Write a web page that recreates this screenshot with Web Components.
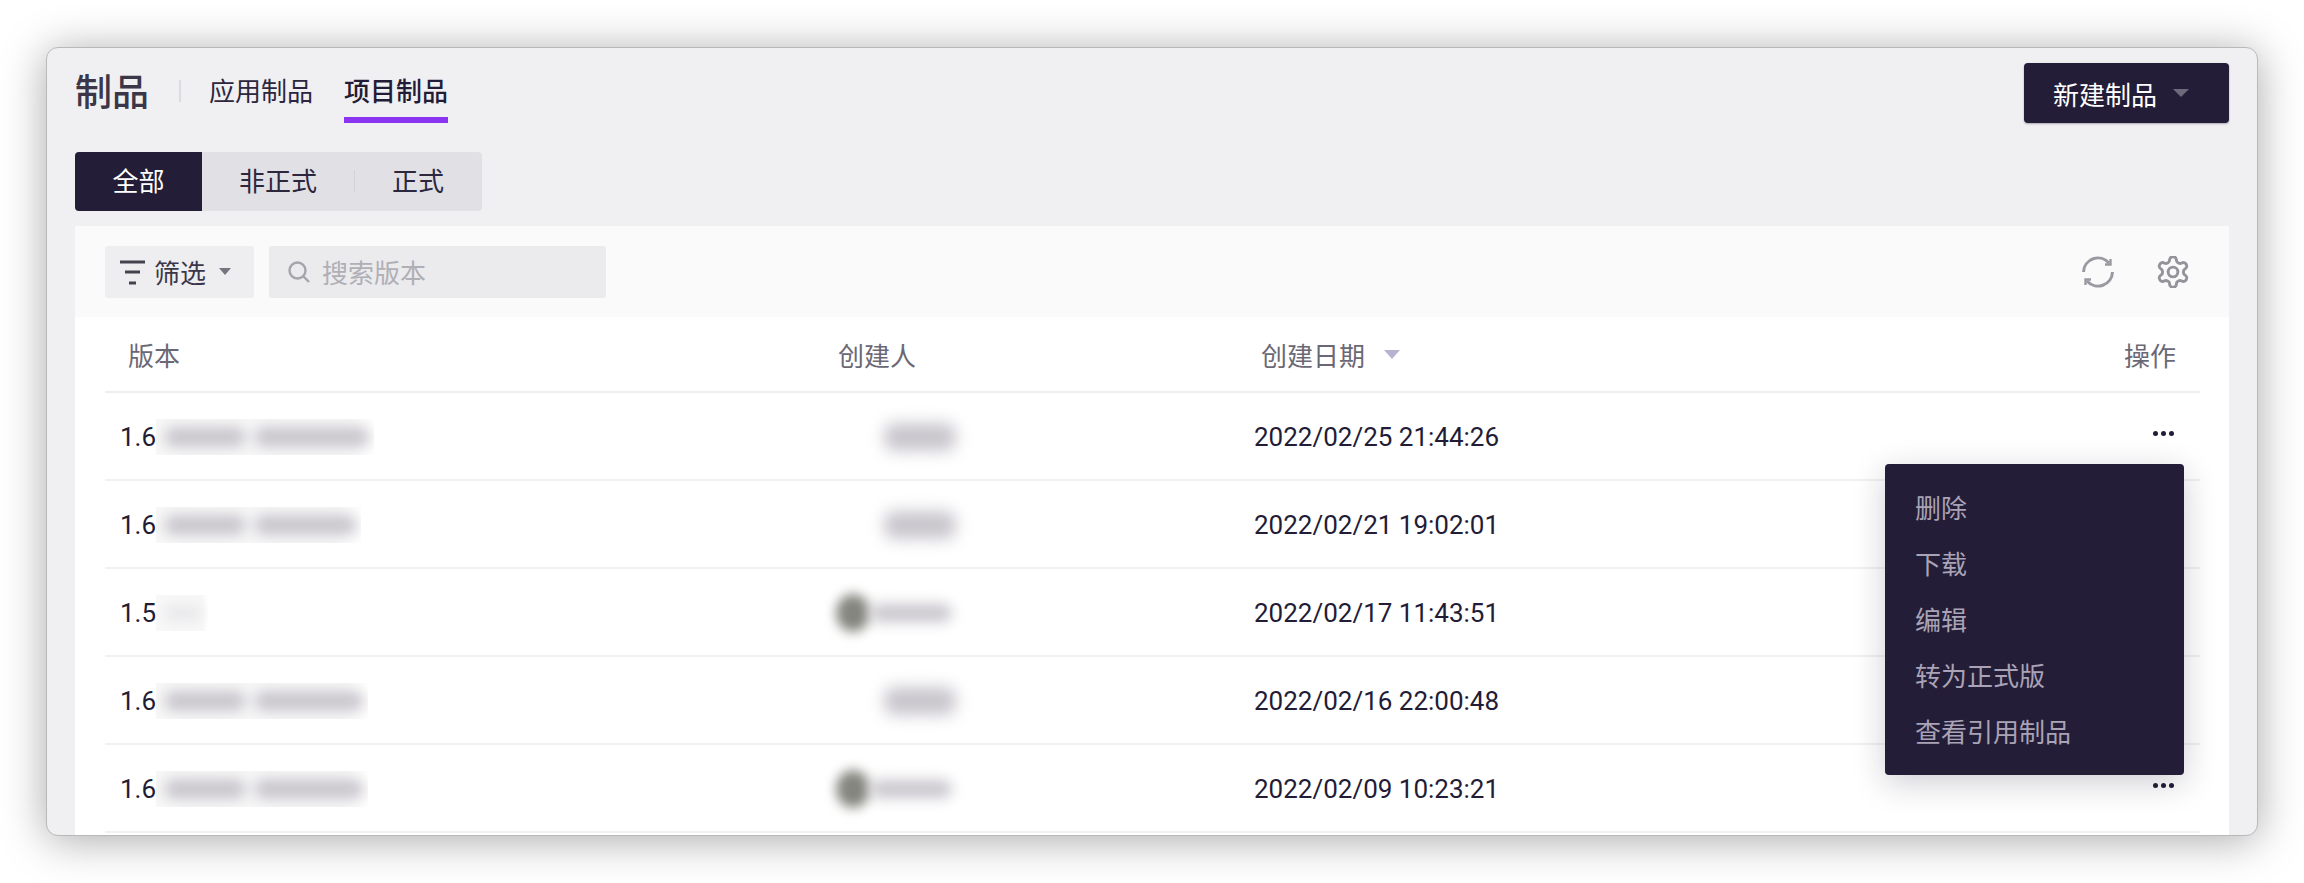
<!DOCTYPE html>
<html lang="zh">
<head>
<meta charset="utf-8">
<title>制品</title>
<style>
  html, body { margin: 0; height: 100%; overflow: hidden; background: #fff; }
  body {
    box-sizing: border-box;
    padding: 47px 46px 47px 46px;
    font-family: Roboto, "Noto Sans CJK SC", sans-serif;
    font-size: 26px;
    color: #231c36;
  }
</style>
</head>
<body>
<product-window>
  <product-header slot="header" title-text="制品" action="新建制品">
    <nav-tab>应用制品</nav-tab>
    <nav-tab active>项目制品</nav-tab>
  </product-header>
  <seg-control slot="filters">
    <seg-item active>全部</seg-item>
    <seg-item>非正式</seg-item>
    <seg-item divider>正式</seg-item>
  </seg-control>
  <table-toolbar slot="toolbar" placeholder="搜索版本"></table-toolbar>
  <version-table slot="table">
    <version-row version="1.6" blur="218,bars" creator="short" created="2022/02/25 21:44:26"></version-row>
    <version-row version="1.6" blur="205,bars" creator="short" created="2022/02/21 19:02:01"></version-row>
    <version-row version="1.5" blur="52,faint" creator="avatar" created="2022/02/17 11:43:51"></version-row>
    <version-row version="1.6" blur="212,bars" creator="short" created="2022/02/16 22:00:48"></version-row>
    <version-row version="1.6" blur="212,bars" creator="avatar" created="2022/02/09 10:23:21"></version-row>
    <action-menu slot="menu">
      <span>删除</span><span>下载</span><span>编辑</span><span>转为正式版</span><span>查看引用制品</span>
    </action-menu>
  </version-table>
</product-window>

<script>
// The window frame with its drop shadow. Content past the bottom edge is cut off.
customElements.define('product-window', class extends HTMLElement {
  constructor () {
    super()
    this.attachShadow({ mode: 'open' }).innerHTML = `
      <style>
        :host {
          box-sizing: border-box;
          display: flex;
          flex-direction: column;
          height: 100%;
          padding: 15px 28px 0 28px;
          overflow: hidden;
          background: #f0f0f3;
          border: 1px solid #b9b9bc;
          border-radius: 12px;
          box-shadow: 0 4px 44px rgba(0, 0, 0, .34);
        }
        ::slotted([slot=filters]) { margin: 29px 0 15px; }
      </style>
      <slot name="header"></slot>
      <slot name="filters"></slot>
      <slot name="toolbar"></slot>
      <slot name="table"></slot>`
  }
})

// Title, tab links and the primary button.
customElements.define('product-header', class extends HTMLElement {
  constructor () {
    super()
    this.attachShadow({ mode: 'open' }).innerHTML = `
      <style>
        :host { display: flex; align-items: stretch; height: 60px; }
        h1 {
          margin: 0; align-self: center; width: 72px; white-space: nowrap;
          font-size: 37px; font-weight: 500; color: #3b3749; line-height: 1;
        }
        .sep { align-self: center; width: 2px; height: 22px; margin: 0 28px 4px 32px; background: #dcdce0; }
        nav { display: flex; gap: 31px; }
        button {
          display: flex; align-items: center; gap: 16px;
          margin-left: auto; width: 205px; padding: 0 0 0 29px;
          font: inherit; color: #fff; text-align: left;
          background: #241d38; border: 0; border-radius: 4px;
          box-shadow: 0 1px 2px rgba(36, 29, 56, .35);
        }
        .caret { width: 0; height: 0; border: 8px solid transparent; border-top: 8px solid #6e6a7b; border-bottom: 0; }
      </style>
      <h1>${this.getAttribute('title-text')}</h1>
      <span class="sep"></span>
      <nav><slot></slot></nav>
      <button>${this.getAttribute('action')}<span class="caret"></span></button>`
  }
})

customElements.define('nav-tab', class extends HTMLElement {
  constructor () {
    super()
    this.attachShadow({ mode: 'open' }).innerHTML = `
      <style>
        :host {
          box-sizing: border-box; display: flex; align-items: center;
          height: 60px; padding-bottom: 2px; border-bottom: 6px solid transparent; color: #2c263e;
        }
        :host([active]) { border-bottom-color: #8a33f0; font-weight: 500; color: #231c36; }
      </style>
      <slot></slot>`
  }
})

customElements.define('seg-control', class extends HTMLElement {
  constructor () {
    super()
    this.attachShadow({ mode: 'open' }).innerHTML = `
      <style>
        :host {
          display: flex; width: 407px; height: 59px;
          background: #e1e0e5; border-radius: 4px; overflow: hidden;
        }
      </style>
      <slot></slot>`
  }
})

customElements.define('seg-item', class extends HTMLElement {
  constructor () {
    super()
    this.attachShadow({ mode: 'open' }).innerHTML = `
      <style>
        :host {
          position: relative; display: flex; align-items: center; justify-content: center;
          box-sizing: border-box; width: 128px; padding-bottom: 5px; color: #2c263e;
        }
        :host([active]) { width: 127px; background: #241d38; color: #fff; }
        :host(:nth-child(2)) { width: 152px; }
        :host([divider])::before {
          content: ""; position: absolute; left: 0; top: 18px; width: 1px; height: 22px; background: #d3d2d8;
        }
      </style>
      <slot></slot>`
  }
})

// Filter button, search box and the two icons on the right.
customElements.define('table-toolbar', class extends HTMLElement {
  constructor () {
    super()
    this.attachShadow({ mode: 'open' }).innerHTML = `
      <style>
        :host {
          display: flex; align-items: center; gap: 15px;
          height: 91px; padding: 0 40px 0 30px;
          background: #fafafb;
        }
        .filter, .search {
          box-sizing: border-box; display: flex; align-items: center;
          height: 52px; border-radius: 3px;
        }
        .filter { width: 149px; padding-left: 15px; gap: 8px; background: #eeeef1; color: #3b3749; }
        .filter .caret { width: 0; height: 0; margin-left: 5px; border: 6px solid transparent; border-top: 7px solid #77747f; border-bottom: 0; }
        .search { width: 337px; padding-left: 19px; gap: 12px; background: #ebebee; color: #b0afb5; }
        .tools { display: flex; gap: 43px; margin-left: auto; }
        svg { display: block; fill: none; }
      </style>
      <div class="filter">
        <svg width="26" height="26" viewBox="0 0 26 26" stroke="#45414f" stroke-width="3">
          <path d="M0 3h25M5 13h15M9 24h7"/>
        </svg>
        筛选<span class="caret"></span>
      </div>
      <div class="search">
        <svg width="22" height="22" viewBox="0 0 22 22" stroke="#a5a4ab" stroke-width="2.4">
          <circle cx="9.5" cy="9.5" r="8"/><path d="M15.5 15.5L21 21"/>
        </svg>
        ${this.getAttribute('placeholder')}
      </div>
      <div class="tools">
        <svg width="32" height="32" viewBox="0 0 32 32" stroke="#9a99a1" stroke-width="3">
          <path d="M1.5 16A14.5 14.5 0 0 1 27 7"/><path d="M28.5 3v5.5H23" stroke-width="2.4"/>
          <path d="M30.500 16A14.500 14.500 0 0 1 5 25"/><path d="M3.500 29v-5.500H9" stroke-width="2.4"/>
        </svg>
        <svg width="32" height="32" viewBox="1.5 1.5 21 21" stroke="#94939b" stroke-width="1.9">
          <path d="M12.22 2h-.44a2 2 0 0 0-2 2v.18a2 2 0 0 1-1 1.73l-.43.25a2 2 0 0 1-2 0l-.15-.08a2 2 0 0 0-2.73.73l-.22.38a2 2 0 0 0 .73 2.73l.15.1a2 2 0 0 1 1 1.72v.51a2 2 0 0 1-1 1.74l-.15.09a2 2 0 0 0-.73 2.73l.22.38a2 2 0 0 0 2.73.73l.15-.08a2 2 0 0 1 2 0l.43.25a2 2 0 0 1 1 1.73V20a2 2 0 0 0 2 2h.44a2 2 0 0 0 2-2v-.18a2 2 0 0 1 1-1.73l.43-.25a2 2 0 0 1 2 0l.15.08a2 2 0 0 0 2.73-.73l.22-.39a2 2 0 0 0-.73-2.73l-.15-.08a2 2 0 0 1-1-1.74v-.5a2 2 0 0 1 1-1.74l.15-.09a2 2 0 0 0 .73-2.73l-.22-.38a2 2 0 0 0-2.73-.73l-.15.08a2 2 0 0 1-2 0l-.43-.25a2 2 0 0 1-1-1.73V4a2 2 0 0 0-2-2z"/>
          <circle cx="12" cy="12" r="3.2"/>
        </svg>
      </div>`
  }
})

// White table body: header row, version rows and the open menu on top.
customElements.define('version-table', class extends HTMLElement {
  constructor () {
    super()
    this.attachShadow({ mode: 'open' }).innerHTML = `
      <style>
        :host { position: relative; display: block; flex: 1; padding: 0 29px 0 30px; background: #fff; }
        .head {
          display: grid; grid-template-columns: 710px 423px 1fr auto; align-items: center;
          height: 74px; padding: 0 24px 0 23px; color: #6b6875;
          border-bottom: 2px solid #eeeef0;
        }
        .sort { display: flex; align-items: center; gap: 19px; }
        .sort i { width: 0; height: 0; border: 8px solid transparent; border-top: 9px solid #b5b3d0; border-bottom: 0; }
        ::slotted([slot=menu]) { position: absolute; top: 147px; right: 45px; }
      </style>
      <div class="head">
        <span>版本</span>
        <span>创建人</span>
        <span class="sort">创建日期<i></i></span>
        <span>操作</span>
      </div>
      <slot></slot>
      <slot name="menu"></slot>`
  }
})

// One row. Version suffix and creator are blurred out in the source picture.
customElements.define('version-row', class extends HTMLElement {
  constructor () {
    super()
    const [width, kind] = this.getAttribute('blur').split(',')
    const suffix = kind === 'bars'
      ? '<b style="width:82px"></b><b style="width:' + (width - 102) + 'px;margin-left:8px"></b>'
      : '<b class="faint" style="width:' + (width - 14) + 'px"></b>'
    const creator = this.getAttribute('creator') === 'avatar'
      ? '<span class="who"><em></em><b style="width:82px;height:18px"></b></span>'
      : '<span class="who short"><b style="width:72px;height:28px;filter:blur(8px)"></b></span>'
    this.attachShadow({ mode: 'open' }).innerHTML = `
      <style>
        :host {
          box-sizing: border-box; display: grid; grid-template-columns: 719px 415px 1fr auto;
          align-items: center; height: 88px; padding: 2px 26px 0 15px;
          border-bottom: 2px solid #f1f1f3;
        }
        .ver { display: flex; align-items: center; }
        .mask {
          display: flex; align-items: center; height: 36px; padding: 0 0 0 8px; overflow: hidden;
          background: linear-gradient(to right, #f8f8f8 88%, transparent);
        }
        b { display: block; flex: none; height: 20px; border-radius: 10px; background: #c8c5cc; filter: blur(7px); }
        b.faint { height: 14px; background: #e6e5e8; }
        .who { display: flex; align-items: center; gap: 0; margin-left: -3px; }
        .who.short { margin-left: 0; padding-left: 45px; }
        em { display: block; width: 34px; height: 38px; border-radius: 50%; background: #85857f; filter: blur(6px); }
        .more { display: flex; gap: 3px; }
        .more i { width: 5px; height: 5px; border-radius: 50%; background: #231c36; }
        .end { align-self: start; margin-top: 36px; }
      </style>
      <span class="ver">${this.getAttribute('version')}<span class="mask" style="width:${width}px;box-sizing:border-box">${suffix}</span></span>
      ${creator}
      <span>${this.getAttribute('created')}</span>
      <span class="more end"><i></i><i></i><i></i></span>`
  }
})

customElements.define('action-menu', class extends HTMLElement {
  constructor () {
    super()
    this.attachShadow({ mode: 'open' }).innerHTML = `
      <style>
        :host {
          box-sizing: border-box; display: flex; flex-direction: column;
          width: 299px; height: 311px; padding: 17px 30px;
          background: #241d38; color: #a9a3b5; border-radius: 4px;
          box-shadow: 0 8px 32px rgba(36, 29, 56, .22);
        }
        ::slotted(span) { display: block; line-height: 56px; }
      </style>
      <slot></slot>`
  }
})
</script>
</body>
</html>
